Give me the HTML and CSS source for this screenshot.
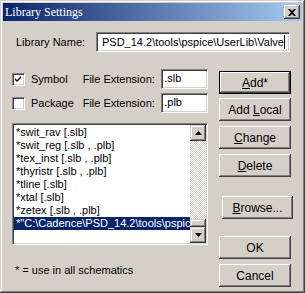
FILE: index.html
```html
<!DOCTYPE html>
<html lang="en">
<head>
    <meta charset="UTF-8">
    <title>Library Settings</title>
    <link rel="stylesheet" href="styles.css">
</head>
<body>
    <div class="window">
        <div class="titlebar">
            <span class="title">Library Settings</span>
            <span class="close">
                <svg width="8" height="7" viewBox="0 0 8 7"><path d="M0 0h2l2 2 2-2h2L5 3.5 8 7H6L4 5 2 7H0l3-3.5z" fill="#000"/></svg>
            </span>
        </div>
        <div class="content">
            <div class="name-row">
                <label class="name-label">Library Name:</label>
                <div class="field name-field"><span>PSD_14.2\tools\pspice\UserLib\Valve</span><span class="caret"></span></div>
            </div>
            <div class="main">
                <div class="left">
                    <div class="ext-row">
                        <span class="check">
                            <svg width="9" height="9" viewBox="0 0 9 9"><path d="M1 3l2 2 4-4v2L3 7 1 5z" fill="#000"/></svg>
                        </span>
                        <span class="check-label">Symbol</span>
                        <span class="ext-label">File Extension:</span>
                        <div class="field ext-field">.slb</div>
                    </div>
                    <div class="ext-row second">
                        <span class="check"></span>
                        <span class="check-label">Package</span>
                        <span class="ext-label">File Extension:</span>
                        <div class="field ext-field">.plb</div>
                    </div>
                    <div class="listbox">
                        <ul class="items">
                            <li>*swit_rav [.slb]</li>
                            <li>*swit_reg [.slb , .plb]</li>
                            <li>*tex_inst [.slb , .plb]</li>
                            <li>*thyristr [.slb , .plb]</li>
                            <li>*tline [.slb]</li>
                            <li>*xtal [.slb]</li>
                            <li>*zetex [.slb , .plb]</li>
                            <li class="selected">*"C:\Cadence\PSD_14.2\tools\pspice\UserLib\Valve</li>
                        </ul>
                        <div class="scrollbar">
                            <span class="arrow"><svg width="7" height="4" viewBox="0 0 7 4"><path d="M3.5 0L7 4H0z" fill="#000"/></svg></span>
                            <span class="track"></span>
                            <span class="thumb"></span>
                            <span class="arrow"><svg width="7" height="4" viewBox="0 0 7 4"><path d="M0 0h7L3.5 4z" fill="#000"/></svg></span>
                        </div>
                    </div>
                    <p class="note">* = use in all schematics</p>
                </div>
                <div class="buttons">
                    <button class="btn default"><u>A</u>dd*</button>
                    <button class="btn add-local">Add <u>L</u>ocal</button>
                    <button class="btn gap5"><u>C</u>hange</button>
                    <button class="btn gap5"><u>D</u>elete</button>
                    <button class="btn browse"><u>B</u>rowse...</button>
                    <button class="btn ok">OK</button>
                    <button class="btn gap5">Cancel</button>
                </div>
            </div>
        </div>
    </div>
</body>
</html>
```

FILE: styles.css
```css
body {
    margin: 0;
    font-family: "Liberation Sans", Arial, sans-serif;
    font-size: 11px;
    background-color: #d4d0c8;
}

.window {
    width: 305px;
    height: 293px;
    box-sizing: border-box;
    padding: 3px;
    background-color: #d4d0c8;
    box-shadow: inset -1px -1px #404040, inset 1px 1px #d4d0c8, inset -2px -2px #808080, inset 2px 2px #fff;
}

.titlebar {
    height: 18px;
    display: flex;
    align-items: center;
    justify-content: space-between;
    padding: 0 2px 0 2px;
    background: linear-gradient(to right, #0a246a, #a6caf0);
}

.title {
    color: #fff;
    font-family: "Liberation Serif", serif;
    font-size: 12px;
}

.close {
    width: 16px;
    height: 14px;
    display: flex;
    align-items: center;
    justify-content: center;
    background-color: #d4d0c8;
    box-shadow: inset -1px -1px #404040, inset 1px 1px #fff, inset -2px -2px #808080;
}

.content {
    padding: 11px 11px 0 9px;
}

.name-row {
    display: flex;
    align-items: center;
}

.name-label {
    width: 80px;
    margin-left: 4px;
    white-space: nowrap;
}

.field {
    box-sizing: border-box;
    height: 20px;
    line-height: 16px;
    padding-left: 2px;
    background-color: #fff;
    border: 1px solid;
    border-color: #808080 #fff #fff #808080;
    box-shadow: inset 1px 1px #404040, inset -1px -1px #d4d0c8;
    white-space: nowrap;
    overflow: hidden;
}

.name-field {
    width: 194px;
    display: flex;
    align-items: center;
    justify-content: flex-end;
    padding-right: 4px;
}

.caret {
    flex: none;
    width: 1px;
    height: 14px;
    background-color: #000;
}

.main {
    display: flex;
    gap: 11px;
    margin-top: 17px;
}

.left {
    width: 196px;
}

.ext-row {
    display: flex;
    align-items: center;
    white-space: nowrap;
}

.ext-row.second {
    margin-top: 4px;
}

.check {
    box-sizing: border-box;
    width: 13px;
    height: 13px;
    margin-right: 6px;
    display: flex;
    align-items: center;
    justify-content: center;
    background-color: #fff;
    border: 1px solid;
    border-color: #808080 #fff #fff #808080;
    box-shadow: inset 1px 1px #404040, inset -1px -1px #d4d0c8;
}

.check-label {
    width: 52px;
}

.ext-label {
    width: 79px;
}

.ext-field {
    width: 47px;
}

.listbox {
    box-sizing: border-box;
    height: 122px;
    margin-top: 10px;
    display: flex;
    background-color: #fff;
    border: 1px solid;
    border-color: #808080 #fff #fff #808080;
    box-shadow: inset 1px 1px #404040, inset -1px -1px #d4d0c8;
    padding: 1px;
}

.items {
    flex: 1;
    min-width: 0;
    list-style: none;
    margin: 0;
    padding: 1px 0 0 0;
    overflow: hidden;
}

.items li {
    height: 13px;
    line-height: 13px;
    padding-left: 2px;
    white-space: nowrap;
    overflow: hidden;
}

.items li.selected {
    background-color: #0a246a;
    color: #fff;
}

.scrollbar {
    width: 16px;
    display: flex;
    flex-direction: column;
}

.arrow,
.thumb {
    display: flex;
    align-items: center;
    justify-content: center;
    background-color: #d4d0c8;
    box-shadow: inset -1px -1px #404040, inset 1px 1px #d4d0c8, inset -2px -2px #808080, inset 2px 2px #fff;
}

.arrow {
    height: 16px;
}

.thumb {
    height: 8px;
}

.track {
    flex: 1;
    background: repeating-conic-gradient(#fff 0 25%, #d4d0c8 0 50%) 0 0 / 2px 2px;
}

.note {
    margin: 18px 0 0 3px;
    line-height: 14px;
}

.buttons {
    width: 72px;
    display: flex;
    flex-direction: column;
}

.btn {
    box-sizing: border-box;
    width: 72px;
    height: 23px;
    padding: 0;
    border: none;
    font-family: inherit;
    font-size: 12px;
    color: #000;
    background-color: #d4d0c8;
    box-shadow: inset -1px -1px #404040, inset 1px 1px #fff, inset -2px -2px #808080, inset 2px 2px #d4d0c8;
}

.btn.default {
    margin-top: 2px;
    border: 1px solid #000;
}

.btn.add-local {
    margin-top: 4px;
}

.btn.gap5 {
    margin-top: 5px;
}

.btn.browse {
    width: 71px;
    margin: 19px 0 0 3px;
}

.btn.ok {
    margin-top: 17px;
}
```
